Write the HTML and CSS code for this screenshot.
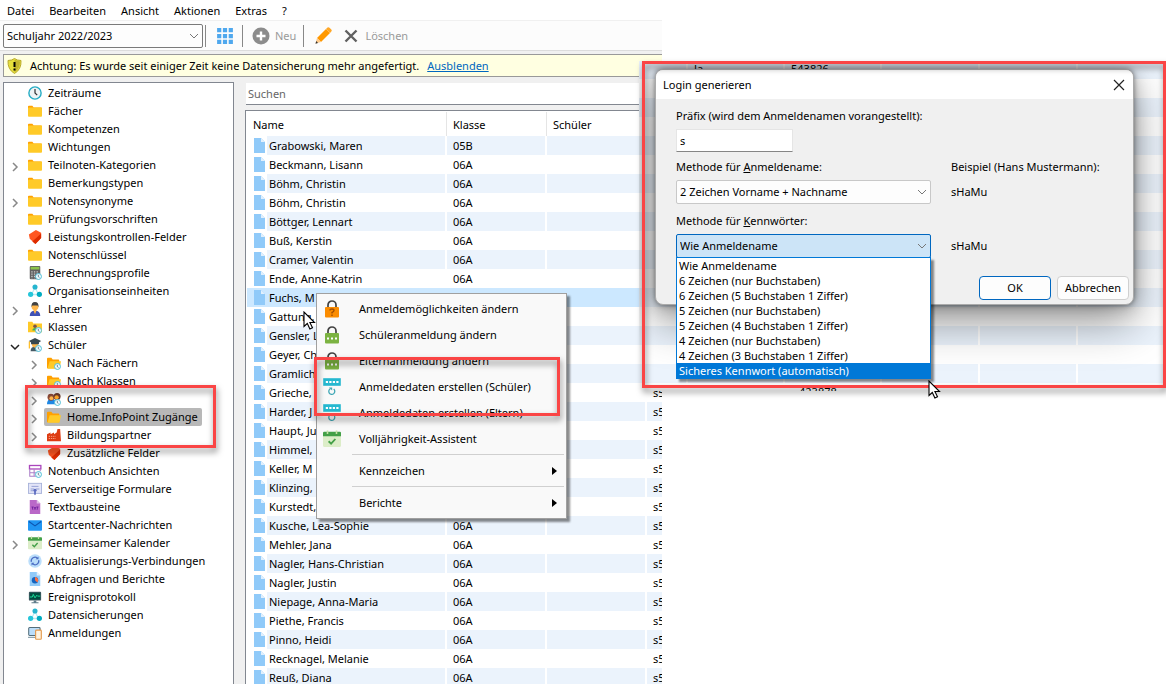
FILE: index.html
```html
<!DOCTYPE html>
<html lang="de">
<head>
<meta charset="utf-8">
<title>Schulverwaltung</title>
<link rel="stylesheet" href="styles.css">
</head>
<body>
<svg class="sprite" aria-hidden="true">
  <symbol id="file" viewBox="0 0 12 15"><path d="M1 0h7l4 4v11H1z" fill="#90caf9"/><path d="M8 0v4h4z" fill="#e1f0fd"/></symbol>
  <symbol id="folder" viewBox="0 0 16 16"><path d="M0 3q0-1 1-1h4l1.500 2H15q1 0 1 1v3H0z" fill="#ffa000"/><rect x="0" y="4" width="16" height="10.500" rx="1" fill="#ffca28"/></symbol>
  <symbol id="folder-open" viewBox="0 0 16 16"><path d="M0 3q0-1 1-1h4l1.500 2H13q1 0 1 1v9H0z" fill="#ffa000"/><path d="M3 6h13l-1.500 7.500q-.2 1-1.200 1H.5z" fill="#ffca28"/></symbol>
  <symbol id="badge" viewBox="0 0 16 16"><circle cx="12" cy="12" r="3.400" fill="#eefbff" stroke="#4dbcd4" stroke-width="1.100"/><path d="M11.800 10v2.200l1.300.8" fill="none" stroke="#456" stroke-width=".8"/></symbol>
  <symbol id="clock" viewBox="0 0 16 16"><circle cx="8" cy="8" r="7" fill="#eef3f5" stroke="#25acc4" stroke-width="1.600"/><path d="M8 3.500V8l2.500 2.500" fill="none" stroke="#333" stroke-width="1.400"/></symbol>
  <symbol id="tag" viewBox="0 0 16 16"><path d="M1 5l8-5 6 3v6l-6.500 7L2 10z" fill="#ff5722"/><path d="M15 4v5l-6.500 7L5 13z" fill="#dd2c00"/></symbol>
  <symbol id="calc" viewBox="0 0 16 16"><rect x="2" y="0" width="12" height="15" rx="1" fill="#616161"/><rect x="3" y="1" width="10" height="3" fill="#8bc34a"/><path d="M4.500 6v8M7.500 6v8M10.500 6v8" stroke="#ccc" stroke-width="1.500" stroke-dasharray="1.500 1"/><use href="#badge"/></symbol>
  <symbol id="nodes" viewBox="0 0 16 16"><path d="M8 4L4 12M8 4l4 8M4 12h8" stroke="#b9ecf3" stroke-width="1.500"/><circle cx="8" cy="3.500" r="2.900" fill="#26b5cf"/><circle cx="3" cy="11.800" r="3" fill="#26c6da"/><circle cx="13" cy="11.800" r="3" fill="#00acc1"/></symbol>
  <symbol id="teacher" viewBox="0 0 16 16"><path d="M2 16q0-6 6-6t6 6z" fill="#3f51b5"/><path d="M6 9h4l-2 5z" fill="#ffb74d"/><circle cx="8" cy="5.500" r="3.900" fill="#ffb74d"/><path d="M4 6q-.5-6 4-6t4 6l-1-2H5z" fill="#424242"/></symbol>
  <symbol id="class" viewBox="0 0 16 16"><path d="M0 2h5l1 2h10v10H0z" fill="#ffca28"/><circle cx="8" cy="7" r="2" fill="#795548"/><path d="M5 12q0-3 3-3t3 3z" fill="#4caf50"/><use href="#badge"/></symbol>
  <symbol id="student" viewBox="0 0 16 16"><path d="M3 15q0-5 5-5t5 5z" fill="#455a64"/><circle cx="8" cy="7.500" r="3.500" fill="#ffb74d"/><path d="M1 3.500L8 0l7 3.500-2.500 1.500v2h-9V5z" fill="#37474f"/><path d="M1.500 4v8" stroke="#ffb300" stroke-width="1.200"/><use href="#badge"/></symbol>
  <symbol id="folder-time" viewBox="0 0 16 16"><use href="#folder-open"/><use href="#badge"/></symbol>
  <symbol id="group" viewBox="0 0 16 16"><path d="M0 14q0-6 5-6t6 6z" fill="#1e88e5"/><circle cx="4.500" cy="6" r="3.900" fill="#8d4b38"/><circle cx="11.500" cy="5" r="4" fill="#6d3b2c"/><circle cx="5" cy="7" r="2.200" fill="#ffb74d"/><circle cx="11" cy="6" r="2.400" fill="#ffa726"/><use href="#badge"/></symbol>
  <symbol id="factory" viewBox="0 0 16 16"><path d="M0 15V7l4-2v2l4-2v2l3-2 1-4h3l1 14z" fill="#dd3b12"/><path d="M2 9.500h8M2 12h8" stroke="#ffab91" stroke-width="1" stroke-dasharray="1.500 1"/></symbol>
  <symbol id="notebook" viewBox="0 0 16 16"><rect x="1.700" y="1.700" width="13" height="4" fill="#fff" stroke="#ab47bc" stroke-width="1.500"/><path d="M2 6v8h7M2 10h7M7 6v8M14 6v2" fill="none" stroke="#ab7fc8" stroke-width="1.200"/><use href="#badge"/></symbol>
  <symbol id="form" viewBox="0 0 16 16"><rect x=".5" y="1.500" width="15" height="11.500" fill="#e3e5f8" stroke="#a5b0d8"/><path d="M4 5h8M3 8h4M9 8h4M3 10h3" stroke="#8a98cf"/><circle cx="8" cy="9.500" r="1.800" fill="#5c6bc0"/><path d="M7 10.500h2V15l-1-1-1 1z" fill="#5c6bc0"/></symbol>
  <symbol id="txt" viewBox="0 0 16 16"><path d="M2 0h8l4 4v12H2z" fill="#ba68c8"/><path d="M10 0v4h4z" fill="#e1bee7"/><path d="M4 8h2.500M5.200 8v3M7 8l2 3M9 8l-2 3M9.500 8H12M10.700 8v3" stroke="#6a1b9a" stroke-width=".9"/></symbol>
  <symbol id="mail" viewBox="0 0 16 16"><rect x="0" y="2.500" width="16" height="12" rx="1" fill="#2196f3"/><path d="M1 4l7 5 7-5" fill="none" stroke="#0d55b0" stroke-width="1.300"/></symbol>
  <symbol id="cal" viewBox="0 0 16 16"><path d="M0 5h16v9q0 1-1 1H1q-1 0-1-1z" fill="#dcedc8"/><path d="M1 1.500h14q1 0 1 1V5.500H0v-3q0-1 1-1z" fill="#43a047"/><path d="M4 .5v3M12 .5v3" stroke="#c5e1a5" stroke-width="1.400"/><path d="M5 10l2.200 2.200L11 8" fill="none" stroke="#43a047" stroke-width="1.600"/></symbol>
  <symbol id="sync" viewBox="0 0 16 16"><circle cx="8" cy="8" r="7.700" fill="#bbdefb"/><path d="M3.800 9a4.300 4.300 0 0 1 7-4.200M12.200 7a4.300 4.300 0 0 1-7 4.200" fill="none" stroke="#4c6fc5" stroke-width="1.400"/><path d="M12 2.800v3.200H8.800zM4 13.200V10h3.200z" fill="#4c6fc5"/></symbol>
  <symbol id="report" viewBox="0 0 16 16"><path d="M2 0h8l4 4v12H2z" fill="#90caf9"/><path d="M10 0v4h4z" fill="#e1f0fd"/><circle cx="8" cy="9.500" r="3.700" fill="#1565c0"/><path d="M8 9.500V5.800a3.700 3.700 0 0 1 2.700 6.200z" fill="#ff7043"/></symbol>
  <symbol id="monitor" viewBox="0 0 16 16"><rect x="1" y="2" width="14" height="10" rx="1" fill="#455a64"/><rect x="2" y="3" width="12" height="8" fill="#004d40"/><path d="M2 8h3l1-3 2 4 2-3 1 1h3" fill="none" stroke="#1de9a0"/><path d="M6.500 12h3v2H12v1H4v-1h2.500z" fill="#607d8b"/></symbol>
  <symbol id="devices" viewBox="0 0 16 16"><rect x=".8" y="1.800" width="13" height="9" rx="1" fill="#bbdefb" stroke="#546e7a" stroke-width="1.200"/><path d="M0 13h9" stroke="#90a4ae" stroke-width="1.400"/><rect x="8.700" y="4.700" width="6.500" height="10.500" rx="1" fill="#fff3e0" stroke="#e39a4e" stroke-width="1.300"/></symbol>
  <symbol id="right" viewBox="0 0 10 10"><path d="M3 1l4 4-4 4" fill="none" stroke="currentColor" stroke-width="1.500"/></symbol>
  <symbol id="down" viewBox="0 0 10 10"><path d="M1 3l4 4 4-4" fill="none" stroke="currentColor" stroke-width="1.500"/></symbol>
  <symbol id="lock" viewBox="0 0 18 18"><path d="M5 8V5a4 4 0 0 1 8 0v3" fill="none" stroke="#424242" stroke-width="1.700"/><rect x="2" y="7" width="14" height="10.500" rx="1" fill="currentColor"/></symbol>
  <symbol id="keyset" viewBox="0 0 18 18"><rect x="1" y="1" width="16" height="6" fill="#26b8d0" stroke="#26b8d0" stroke-width="1.600"/><path d="M2.800 4h13" stroke="#fff" stroke-width="2.200" stroke-dasharray="2.200 1.300"/><path d="M7.500 10.700a3 3 0 1 0 3.200.4" fill="none" stroke="#3fa7b5" stroke-width="1.300"/><path d="M6 9.500h3.200v3z" fill="#3fa7b5"/></symbol>
  <symbol id="pointer" viewBox="0 0 13 20"><path d="M1 1v14.500l3.300-3 2.600 5.500 2.600-1.200-2.600-5.300h4.600z" fill="#fff" stroke="#000" stroke-width="1.100"/></symbol>
</svg>

<div class="app">
  <nav class="menubar">
    <button>Datei</button><button>Bearbeiten</button><button>Ansicht</button><button>Aktionen</button><button>Extras</button><button>?</button>
  </nav>
  <div class="toolbar">
    <select class="year" aria-label="Schuljahr"><option>Schuljahr 2022/2023</option></select>
    <i class="bar"></i>
    <button aria-label="Übersicht"><svg width="16" height="16" viewBox="0 0 16 16"><path d="M2.200 0v16M8 0v16M13.800 0v16" stroke="#4fa8ee" stroke-width="4.200" stroke-dasharray="4.300 1.600"/></svg></button>
    <i class="bar"></i>
    <button disabled><svg width="18" height="18" viewBox="0 0 18 18"><circle cx="9" cy="9" r="8.500" fill="#8c8c8c"/><path d="M9 4.500v9M4.500 9h9" stroke="#fff" stroke-width="2.400"/></svg>Neu</button>
    <i class="bar"></i>
    <button aria-label="Bearbeiten"><svg width="17" height="17" viewBox="0 0 17 17"><path d="M2 11l9-9 4 4-9 9z" fill="#ff9800"/><path d="M11 2l1.500-1.500q1-.8 2 .2l1.800 1.800q.9 1 0 2L15 6z" fill="#ffa726"/><path d="M2 11l4 4-5.500 1.500z" fill="#ffca8a"/><path d="M1.200 14l1.800 2-2.500.7z" fill="#333"/></svg></button>
    <button class="del" disabled><svg width="14" height="14" viewBox="0 0 14 14"><path d="M1.500 1.500l11 11M12.500 1.500l-11 11" stroke="#616161" stroke-width="2.400"/></svg>Löschen</button>
  </div>
  <div class="alert"><svg width="15" height="16" viewBox="0 0 15 16"><path d="M7.500.5Q10 2.500 14 2.500q.5 9-6.500 13Q.5 11.500 1 2.500q4 0 6.500-2z" fill="#e6df3c" stroke="#b9a92a"/><path d="M7.500 1.500q2.500 1.700 5.500 2 0 7-5.500 11z" fill="#c3b52e"/><path d="M7.500 4v5M7.500 10.500v2" stroke="#000" stroke-width="2"/></svg><span>Achtung: Es wurde seit einiger Zeit keine Datensicherung mehr angefertigt.</span><a href="#hide">Ausblenden</a></div>
  <div class="panes">
    <aside class="side">
      <ul class="tree">
        <li><span class="chev"></span><span class="node"><svg><use href="#clock"/></svg>Zeiträume</span></li>
        <li><span class="chev"></span><span class="node"><svg><use href="#folder"/></svg>Fächer</span></li>
        <li><span class="chev"></span><span class="node"><svg><use href="#folder"/></svg>Kompetenzen</span></li>
        <li><span class="chev"></span><span class="node"><svg><use href="#folder"/></svg>Wichtungen</span></li>
        <li><span class="chev"><svg><use href="#right"/></svg></span><span class="node"><svg><use href="#folder"/></svg>Teilnoten-Kategorien</span></li>
        <li><span class="chev"></span><span class="node"><svg><use href="#folder"/></svg>Bemerkungstypen</span></li>
        <li><span class="chev"><svg><use href="#right"/></svg></span><span class="node"><svg><use href="#folder"/></svg>Notensynonyme</span></li>
        <li><span class="chev"></span><span class="node"><svg><use href="#folder"/></svg>Prüfungsvorschriften</span></li>
        <li><span class="chev"></span><span class="node"><svg><use href="#tag"/></svg>Leistungskontrollen-Felder</span></li>
        <li><span class="chev"></span><span class="node"><svg><use href="#folder"/></svg>Notenschlüssel</span></li>
        <li><span class="chev"></span><span class="node"><svg><use href="#calc"/></svg>Berechnungsprofile</span></li>
        <li><span class="chev"></span><span class="node"><svg><use href="#nodes"/></svg>Organisationseinheiten</span></li>
        <li><span class="chev"><svg><use href="#right"/></svg></span><span class="node"><svg><use href="#teacher"/></svg>Lehrer</span></li>
        <li><span class="chev"></span><span class="node"><svg><use href="#class"/></svg>Klassen</span></li>
        <li><span class="chev open"><svg><use href="#down"/></svg></span><span class="node"><svg><use href="#student"/></svg>Schüler</span></li>
        <li class="sub"><span class="chev"><svg><use href="#right"/></svg></span><span class="node"><svg><use href="#folder-time"/></svg>Nach Fächern</span></li>
        <li class="sub"><span class="chev"><svg><use href="#right"/></svg></span><span class="node"><svg><use href="#folder-time"/></svg>Nach Klassen</span></li>
        <li class="sub"><span class="chev"><svg><use href="#right"/></svg></span><span class="node"><svg><use href="#group"/></svg>Gruppen</span></li>
        <li class="sub"><span class="chev"><svg><use href="#right"/></svg></span><span class="node current"><svg><use href="#folder-open"/></svg>Home.InfoPoint Zugänge</span></li>
        <li class="sub"><span class="chev"><svg><use href="#right"/></svg></span><span class="node"><svg><use href="#factory"/></svg>Bildungspartner</span></li>
        <li class="sub"><span class="chev"></span><span class="node"><svg><use href="#tag"/></svg>Zusätzliche Felder</span></li>
        <li><span class="chev"></span><span class="node"><svg><use href="#notebook"/></svg>Notenbuch Ansichten</span></li>
        <li><span class="chev"></span><span class="node"><svg><use href="#form"/></svg>Serverseitige Formulare</span></li>
        <li><span class="chev"></span><span class="node"><svg><use href="#txt"/></svg>Textbausteine</span></li>
        <li><span class="chev"></span><span class="node"><svg><use href="#mail"/></svg>Startcenter-Nachrichten</span></li>
        <li><span class="chev"><svg><use href="#right"/></svg></span><span class="node"><svg><use href="#cal"/></svg>Gemeinsamer Kalender</span></li>
        <li><span class="chev"></span><span class="node"><svg><use href="#sync"/></svg>Aktualisierungs-Verbindungen</span></li>
        <li><span class="chev"></span><span class="node"><svg><use href="#report"/></svg>Abfragen und Berichte</span></li>
        <li><span class="chev"></span><span class="node"><svg><use href="#monitor"/></svg>Ereignisprotokoll</span></li>
        <li><span class="chev"></span><span class="node"><svg><use href="#nodes"/></svg>Datensicherungen</span></li>
        <li><span class="chev"></span><span class="node"><svg><use href="#devices"/></svg>Anmeldungen</span></li>
      </ul>
    </aside>
    <main class="content">
      <input class="search" type="text" placeholder="Suchen" aria-label="Suchen">
      <div class="list">
        <table>
          <colgroup><col class="c-icon"><col class="c-name"><col class="c-col"><col class="c-col"><col></colgroup>
          <thead><tr><th colspan="2">Name</th><th>Klasse</th><th>Schüler</th><th></th></tr></thead>
          <tbody>
            <tr><td><svg><use href="#file"/></svg></td><td>Grabowski, Maren</td><td>05B</td><td></td><td></td></tr>
            <tr><td><svg><use href="#file"/></svg></td><td>Beckmann, Lisann</td><td>06A</td><td></td><td></td></tr>
            <tr><td><svg><use href="#file"/></svg></td><td>Böhm, Christin</td><td>06A</td><td></td><td></td></tr>
            <tr><td><svg><use href="#file"/></svg></td><td>Böhm, Christin</td><td>06A</td><td></td><td></td></tr>
            <tr><td><svg><use href="#file"/></svg></td><td>Böttger, Lennart</td><td>06A</td><td></td><td></td></tr>
            <tr><td><svg><use href="#file"/></svg></td><td>Buß, Kerstin</td><td>06A</td><td></td><td></td></tr>
            <tr><td><svg><use href="#file"/></svg></td><td>Cramer, Valentin</td><td>06A</td><td></td><td></td></tr>
            <tr><td><svg><use href="#file"/></svg></td><td>Ende, Anne-Katrin</td><td>06A</td><td></td><td></td></tr>
            <tr class="picked"><td><svg><use href="#file"/></svg></td><td>Fuchs, M</td><td></td><td></td><td></td></tr>
            <tr><td><svg><use href="#file"/></svg></td><td>Gattung,</td><td></td><td></td><td></td></tr>
            <tr><td><svg><use href="#file"/></svg></td><td>Gensler, L</td><td></td><td></td><td></td></tr>
            <tr><td><svg><use href="#file"/></svg></td><td>Geyer, Ch</td><td></td><td></td><td></td></tr>
            <tr><td><svg><use href="#file"/></svg></td><td>Gramlich</td><td></td><td></td><td></td></tr>
            <tr><td><svg><use href="#file"/></svg></td><td>Grieche,</td><td></td><td></td><td>s5</td></tr>
            <tr><td><svg><use href="#file"/></svg></td><td>Harder, J</td><td></td><td></td><td>s5</td></tr>
            <tr><td><svg><use href="#file"/></svg></td><td>Haupt, Ju</td><td></td><td></td><td>s5</td></tr>
            <tr><td><svg><use href="#file"/></svg></td><td>Himmel,</td><td></td><td></td><td>s5</td></tr>
            <tr><td><svg><use href="#file"/></svg></td><td>Keller, M</td><td></td><td></td><td>s5</td></tr>
            <tr><td><svg><use href="#file"/></svg></td><td>Klinzing,</td><td></td><td></td><td>s5</td></tr>
            <tr><td><svg><use href="#file"/></svg></td><td>Kurstedt,</td><td></td><td></td><td>s5</td></tr>
            <tr><td><svg><use href="#file"/></svg></td><td>Kusche, Lea-Sophie</td><td>06A</td><td></td><td>s5</td></tr>
            <tr><td><svg><use href="#file"/></svg></td><td>Mehler, Jana</td><td>06A</td><td></td><td>s5</td></tr>
            <tr><td><svg><use href="#file"/></svg></td><td>Nagler, Hans-Christian</td><td>06A</td><td></td><td>s5</td></tr>
            <tr><td><svg><use href="#file"/></svg></td><td>Nagler, Justin</td><td>06A</td><td></td><td>s5</td></tr>
            <tr><td><svg><use href="#file"/></svg></td><td>Niepage, Anna-Maria</td><td>06A</td><td></td><td>s5</td></tr>
            <tr><td><svg><use href="#file"/></svg></td><td>Piethe, Francis</td><td>06A</td><td></td><td>s5</td></tr>
            <tr><td><svg><use href="#file"/></svg></td><td>Pinno, Heidi</td><td>06A</td><td></td><td>s5</td></tr>
            <tr><td><svg><use href="#file"/></svg></td><td>Recknagel, Melanie</td><td>06A</td><td></td><td>s5</td></tr>
            <tr><td><svg><use href="#file"/></svg></td><td>Reuß, Diana</td><td>06A</td><td></td><td>s5</td></tr>
          </tbody>
        </table>
      </div>
    </main>
  </div>
</div>

<svg class="pointer first"><use href="#pointer"/></svg>
<div class="context" role="menu">
  <button role="menuitem"><svg color="#fb8c00"><use href="#lock"/><path d="M7 10.500q0-1.500 2-1.500t2 1.500q0 1-2 2v1M9 14.500v1.500" fill="none" stroke="#a34f00" stroke-width="1.400"/></svg>Anmeldemöglichkeiten ändern</button>
  <button role="menuitem"><svg color="#7cb342"><use href="#lock"/><path d="M4 12.500h10" stroke="#fff" stroke-width="2" stroke-dasharray="2 2"/></svg>Schüleranmeldung ändern</button>
  <button role="menuitem"><svg color="#7cb342"><use href="#lock"/><path d="M4 12.500h10" stroke="#fff" stroke-width="2" stroke-dasharray="2 2"/></svg>Elternanmeldung ändern</button>
  <button role="menuitem"><svg><use href="#keyset"/></svg>Anmeldedaten erstellen (Schüler)</button>
  <button role="menuitem"><svg><use href="#keyset"/></svg>Anmeldedaten erstellen (Eltern)</button>
  <button role="menuitem"><svg><use href="#cal"/></svg>Volljährigkeit-Assistent</button>
  <hr>
  <button role="menuitem" class="more">Kennzeichen</button>
  <hr>
  <button role="menuitem" class="more">Berichte</button>
</div>
<div class="mark tree-mark"></div>
<div class="mark menu-mark"></div>

<section class="shot">
  <div class="stage">
    <div class="grid">
      <div><span></span><span>Ja</span><span>543826</span><span></span><span></span><span></span></div>
      <div><span></span><span></span><span></span><span></span><span></span><span></span></div>
      <div><span></span><span></span><span></span><span></span><span></span><span></span></div>
      <div><span></span><span></span><span></span><span></span><span></span><span></span></div>
      <div><span></span><span></span><span></span><span></span><span></span><span></span></div>
      <div><span></span><span></span><span></span><span></span><span></span><span></span></div>
      <div><span></span><span></span><span></span><span></span><span></span><span></span></div>
      <div><span></span><span></span><span></span><span></span><span></span><span></span></div>
      <div><span></span><span></span><span></span><span></span><span></span><span></span></div>
      <div><span></span><span></span><span></span><span></span><span></span><span></span></div>
      <div><span></span><span></span><span></span><span></span><span></span><span></span></div>
      <div><span></span><span></span><span></span><span></span><span></span><span></span></div>
      <div><span></span><span></span><span></span><span></span><span></span><span></span></div>
      <div><span></span><span></span><span></span><span></span><span></span><span></span></div>
      <div><span></span><span></span><span></span><span></span><span></span><span></span></div>
      <div><span></span><span></span><span></span><span></span><span></span><span></span></div>
      <div><span></span><span></span><span></span><span></span><span></span><span></span></div>
      <div><span></span><span></span><span class="code">423878</span><span></span><span></span><span></span></div>
    </div>
    <form class="dialog" role="dialog" aria-labelledby="dlg-title">
      <header><h1 id="dlg-title">Login generieren</h1><button type="button" aria-label="Schließen"><svg width="12" height="12" viewBox="0 0 12 12"><path d="M1 1l10 10M11 1L1 11" stroke="#222" stroke-width="1.200"/></svg></button></header>
      <div class="fields">
        <label for="prefix">Präfix (wird dem Anmeldenamen vorangestellt):</label>
        <input id="prefix" type="text" value="s">
        <label for="m-name">Methode für <u>A</u>nmeldename:</label><span>Beispiel (Hans Mustermann):</span>
        <select id="m-name"><option>2 Zeichen Vorname + Nachname</option></select><output>sHaMu</output>
        <label for="m-pass" class="lower">Methode für <u>K</u>ennwörter:</label>
        <div class="combo">
          <select id="m-pass"><option>Wie Anmeldename</option></select>
          <ul class="options" role="listbox">
            <li role="option">Wie Anmeldename</li>
            <li role="option">6 Zeichen (nur Buchstaben)</li>
            <li role="option">6 Zeichen (5 Buchstaben 1 Ziffer)</li>
            <li role="option">5 Zeichen (nur Buchstaben)</li>
            <li role="option">5 Zeichen (4 Buchstaben 1 Ziffer)</li>
            <li role="option">4 Zeichen (nur Buchstaben)</li>
            <li role="option">4 Zeichen (3 Buchstaben 1 Ziffer)</li>
            <li role="option" aria-selected="true">Sicheres Kennwort (automatisch)</li>
          </ul>
        </div><output>sHaMu</output>
      </div>
      <footer><button class="ok">OK</button><button type="button">Abbrechen</button></footer>
    </form>
  </div>
  <div class="mark shot-mark"></div>
  <svg class="pointer second"><use href="#pointer"/></svg>
</section>
</body>
</html>
```
FILE: styles.css
```css
* { box-sizing: border-box; }
body {
  margin: 0;
  position: relative;
  min-height: 100vh;
  overflow: hidden;
  background: #fff;
  color: #000;
  font: 11px/18px "Noto Sans", "Open Sans", sans-serif;
}
button, input, select { font: inherit; color: inherit; margin: 0; border-radius: 0; }
button { border: 0; padding: 0; background: none; white-space: nowrap; }
ul { list-style: none; margin: 0; padding: 0; }
svg { flex: none; display: block; }
.sprite { position: absolute; width: 0; height: 0; }

.app {
  width: calc(100% - 504px);
  height: 100vh;
  display: flex;
  flex-direction: column;
  overflow: hidden;
  background: #f0f0f0;
}
.menubar { display: flex; gap: 15px; height: 20px; padding: 2px 7px 0; background: #fff; }
.menubar button { line-height: 18px; }
.toolbar {
  display: flex; align-items: center; gap: 8px;
  height: 31px; padding: 0 3px;
  background: #fcfcfc;
  border-top: 1px solid #f0f0f0;
  border-bottom: 1px solid #dcdcdc;
}
.toolbar button { display: flex; align-items: center; gap: 5px; padding: 0 3px; }
.toolbar button:disabled { color: #9a9a9a; }
.toolbar .bar + button:disabled { padding: 0 1px; }
.toolbar .del { padding: 0 1px; gap: 7px; }
.bar { width: 1px; height: 22px; background: #888; margin-left: -2px; }
.bar:first-of-type { margin-left: -6px; }
select {
  appearance: none;
  border: 1px solid #c8c8c8;
  background: #fdfdfd url("data:image/svg+xml,%3Csvg xmlns='http://www.w3.org/2000/svg' width='10' height='6'%3E%3Cpath d='M1 1l4 4 4-4' fill='none' stroke='%23777'/%3E%3C/svg%3E") no-repeat right 3px center;
}
.year { width: 200px; height: 24px; padding: 0 3px; border-color: #7a7a7a; border-radius: 2px; }

.alert {
  display: flex; align-items: center;
  height: 23px; margin: 3px 0 5px 3px; padding-left: 3px;
  background: #ffffe1;
  border: 1px solid #999; border-right: 0;
  white-space: nowrap;
}
.alert span { margin-left: 8px; }
.alert a { color: #0067c0; margin-left: 8px; }

.panes { flex: 1; min-height: 0; display: flex; gap: 11px; padding-left: 3px; }
.side { width: 231px; flex: none; background: #fff; border: 1px solid #828790; border-bottom: 0; padding-top: 1px; }
.tree li { display: flex; height: 18px; white-space: nowrap; }
.tree .sub { padding-left: 19px; }
.chev { width: 21px; padding: 6px 0 0 6px; color: #888; }
.chev svg { width: 10px; height: 10px; }
.chev.open { color: #222; }
.node { display: flex; align-items: center; gap: 6px; padding: 0 4px 0 3px; }
.node svg { width: 14px; height: 14px; }
.current { background: #b8b8b8; border-radius: 2px; }

.content { flex: 1; min-width: 0; display: flex; flex-direction: column; gap: 5px; }
.search { height: 22px; margin: 1px 0 0 1px; padding: 0 2px; border: 0; border-bottom: 1px solid #828790; background: #fff; }
.search::placeholder { color: #666; opacity: 1; }
.list { flex: 1; min-height: 0; overflow: hidden; background: #fff; border: 1px solid #828790; border-width: 1px 0 0 1px; padding: 1px 0 0 1px; }
table { width: 100%; table-layout: fixed; border-collapse: separate; border-spacing: 0; }
.c-icon { width: 20px; }
.c-name { width: 180px; }
.c-col { width: 100px; }
th, td { padding: 0 0 0 6px; border-right: 2px solid #fff; text-align: left; font-weight: 400; white-space: nowrap; overflow: hidden; line-height: 19px; height: 19px; }
th { height: 24px; border-right: 1px solid #e5e5e5; }
th:last-child, td:last-child { border-right: 0; }
td:first-child { border-right: 0; }
td:nth-child(2) { padding-left: 2px; }
td svg { width: 12px; height: 15px; }
tbody tr:nth-child(odd) td:not(:first-child) { background: #ebf3fc; }
tbody tr.picked td, tbody tr.picked td:not(:first-child) { background: #cce8ff; border-color: #cce8ff; }

.pointer { position: absolute; width: 13px; height: 20px; }
.pointer.first { left: 303px; top: 311px; }

.context {
  position: absolute; left: 316px; top: 293px; width: 251px;
  padding: 2px;
  background: #f9f9f9;
  border: 1px solid #a0a0a0;
  box-shadow: 3px 3px 2px rgba(0, 0, 0, .45);
}
.context button { display: flex; align-items: center; gap: 18px; width: 100%; height: 26px; padding-left: 4px; }
.context svg { width: 18px; height: 18px; }
.context .more { padding-left: 40px; justify-content: space-between; }
.context .more::after { content: ""; border: 4px solid transparent; border-left: 5px solid #000; border-right: 0; margin-right: 7px; }
.context hr { height: 1px; margin: 2px 0 3px 33px; border: 0; background: #d0d0d0; }

.mark { position: absolute; border: 3px solid #fa4545; filter: drop-shadow(1px 4px 3px rgba(0, 0, 0, .5)); }
.tree-mark { left: 25px; top: 385px; width: 191px; height: 63px; }
.menu-mark { left: 314px; top: 357px; width: 246px; height: 59px; }

.shot { position: absolute; right: 0; top: 61px; width: 527px; }
.stage { position: relative; height: 330px; overflow: hidden; padding: 8px 32px 0 16px; background: #fff; }
.grid { position: absolute; inset: -1px 0 auto 0; }
.grid div { display: grid; grid-template-columns: 49px 97px 97px 98px 98px 1fr; height: 19px; }
.grid span { border-right: 2px solid #fff; padding-left: 6px; line-height: 18px; }
.grid .code { padding-left: 14px; }
.grid div:nth-child(odd) span { background: #ebf3fc; }
.dialog {
  position: relative;
  height: 236px;
  display: flex; flex-direction: column;
  background: #f0f0f0;
  border: 1px solid #aaa;
  border-radius: 8px;
  box-shadow: 0 0 5px rgba(0, 0, 0, .4), 0 2px 16px rgba(0, 0, 0, .25), 0 18px 44px rgba(0, 0, 0, .4);
}
.dialog header { display: flex; align-items: center; justify-content: space-between; height: 29px; padding: 0 8px 0 7px; background: #fff; border-radius: 7px 7px 0 0; }
.dialog h1 { margin: 0; font-size: 11px; font-weight: 400; }
.fields { display: grid; grid-template-columns: 255px 1fr; column-gap: 20px; padding: 8px 20px 0; align-items: center; white-space: nowrap; }
.fields > label:first-child { grid-column: 1 / 3; }
.fields input { grid-column: 1 / 3; width: 117px; height: 23px; margin: 4px 0 6px; padding: 0 3px; border: 1px solid #e5e5e5; border-bottom: 1px solid #868686; background: #fff; }
.fields select { width: 100%; height: 24px; padding: 0 3px; margin-top: 4px; border-radius: 2px; display: block; }
.fields output { padding-top: 4px; }
.fields .lower { grid-column: 1 / 3; margin-top: 8px; }
.combo { position: relative; }
#m-pass { background-color: #cce4f7; border-color: #0067c0; }
.options { position: absolute; left: 0; top: 27px; width: 100%; background: #fff; border: 1px solid #0078d7; box-shadow: 3px 3px 2px rgba(0, 0, 0, .45); line-height: 15px; }
.options li { padding: 0 2px; }
.options [aria-selected] { background: #0078d7; color: #fff; }
.dialog footer { display: flex; justify-content: flex-end; gap: 6px; margin-top: auto; padding: 0 4px 4px; }
.dialog footer button { width: 72px; height: 24px; background: #fdfdfd; border: 1px solid #d0d0d0; border-radius: 4px; }
.dialog footer .ok { border-color: #0067c0; }
.shot-mark { inset: 0 0 auto 3px; height: 327px; }
.pointer.second { left: 289px; top: 319px; }
```
